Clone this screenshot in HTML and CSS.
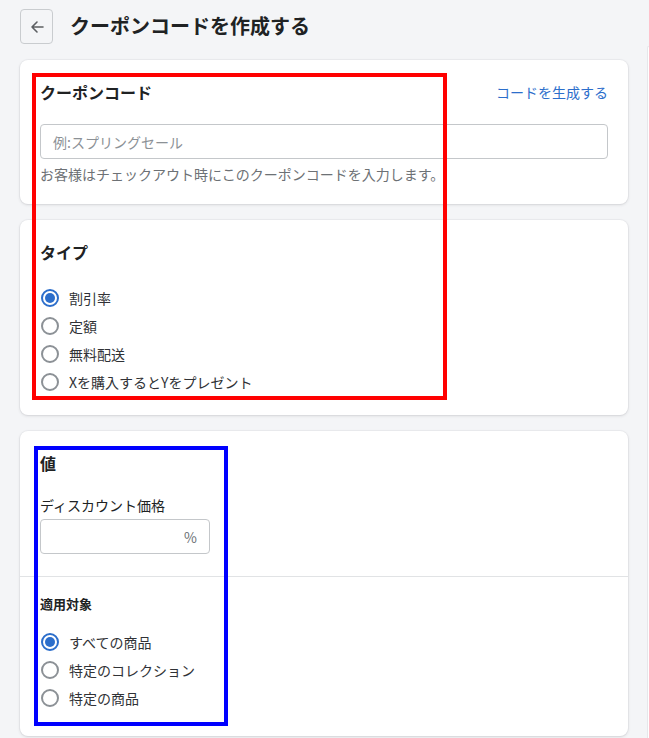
FILE: index.html
```html
<!DOCTYPE html>
<html lang="ja">
<head>
    <meta charset="UTF-8">
    <meta name="viewport" content="width=device-width, initial-scale=1.0">
    <title>クーポンコードを作成する</title>
    <link rel="stylesheet" href="styles.css">
</head>
<body>
    <div class="page">
        <div class="main">
            <header class="header">
                <button class="back-btn" aria-label="戻る">
                    <svg width="16" height="16" viewBox="0 0 16 16">
                        <path d="M14 8H3M8 3L3 8l5 5" fill="none" stroke="#5c5f62" stroke-width="1.6" stroke-linecap="round" stroke-linejoin="round"/>
                    </svg>
                </button>
                <h1 class="title">クーポンコードを作成する</h1>
            </header>

            <section class="card">
                <div class="card-head">
                    <h2 class="card-title">クーポンコード</h2>
                    <a class="link" href="#">コードを生成する</a>
                </div>
                <div class="text-field">
                    <span class="placeholder">例:スプリングセール</span>
                </div>
                <p class="help">お客様はチェックアウト時にこのクーポンコードを入力します。</p>
            </section>

            <section class="card">
                <h2 class="card-title">タイプ</h2>
                <ul class="choices">
                    <li class="choice"><span class="radio checked"></span>割引率</li>
                    <li class="choice"><span class="radio"></span>定額</li>
                    <li class="choice"><span class="radio"></span>無料配送</li>
                    <li class="choice"><span class="radio"></span>Xを購入するとYをプレゼント</li>
                </ul>
            </section>

            <section class="card card-split">
                <div class="card-section">
                    <h2 class="card-title">値</h2>
                    <label class="field-label">ディスカウント価格</label>
                    <div class="text-field small">
                        <span class="suffix">%</span>
                    </div>
                </div>
                <div class="card-section bordered">
                    <h3 class="sub-title">適用対象</h3>
                    <ul class="choices tight">
                        <li class="choice"><span class="radio checked"></span>すべての商品</li>
                        <li class="choice"><span class="radio"></span>特定のコレクション</li>
                        <li class="choice"><span class="radio"></span>特定の商品</li>
                    </ul>
                </div>
            </section>
        </div>
        <aside class="aside"></aside>
    </div>

    <div class="mark mark-red"></div>
    <div class="mark mark-blue"></div>
</body>
</html>
```

FILE: styles.css
```css
body {
    margin: 0;
    background-color: #f4f5f7;
    font-family: "Noto Sans CJK JP", "Noto Sans", sans-serif;
    color: #202223;
    overflow: hidden;
    position: relative;
}
.page {
    display: flex;
    gap: 19px;
    width: 649px;
    height: 738px;
    box-sizing: border-box;
    padding-left: 20px;
    overflow: hidden;
}
.main {
    width: 608px;
    flex-shrink: 0;
}
.aside {
    flex: 1;
    min-width: 0;
    margin-top: 46px;
    background-color: #fff;
    border: 1px solid #e6e7ea;
    border-right: none;
    border-bottom: none;
    border-radius: 8px 0 0 0;
}
.header {
    display: flex;
    align-items: center;
    height: 52px;
    margin-bottom: 8px;
}
.back-btn {
    width: 33px;
    height: 35px;
    margin-top: 1px;
    display: flex;
    align-items: center;
    justify-content: center;
    background: transparent;
    border: 1px solid #c9cccf;
    border-radius: 4px;
    padding: 0;
}
.title {
    margin: 0 0 0 17px;
    font-size: 20px;
    font-weight: 700;
    line-height: 28px;
}
.card {
    background-color: #fff;
    border-radius: 8px;
    box-shadow: 0 0 0 1px rgba(63, 63, 68, 0.04), 0 1px 3px rgba(63, 63, 68, 0.15);
    padding: 20px 20px 19px;
    margin-bottom: 16px;
}
.card-head {
    display: flex;
    justify-content: space-between;
    align-items: center;
}
.card-title {
    margin: 0;
    font-size: 16px;
    font-weight: 700;
    line-height: 24px;
}
.link {
    color: #2c6ecb;
    text-decoration: none;
    font-size: 14px;
    line-height: 24px;
}
.text-field {
    margin-top: 20px;
    height: 35px;
    box-sizing: border-box;
    border: 1px solid #c4c7ca;
    border-radius: 4px;
    display: flex;
    align-items: center;
    padding: 0 12px;
}
.placeholder {
    color: #8c9196;
    font-size: 14px;
}
.help {
    margin: 4px 0 0;
    font-size: 14px;
    line-height: 22px;
    color: #6d7175;
}
.choices {
    list-style: none;
    margin: 20px 0 0;
    padding: 0;
}
.choices.tight {
    margin-top: 14px;
}
.choice {
    display: flex;
    align-items: center;
    height: 28px;
    font-size: 14px;
    color: #303236;
}
.radio {
    width: 18px;
    height: 18px;
    box-sizing: border-box;
    border: 2px solid #8c9196;
    border-radius: 50%;
    margin: 0 10px 0 1px;
    position: relative;
}
.radio.checked {
    border-color: #2c6ecb;
}
.radio.checked::after {
    content: "";
    position: absolute;
    left: 2px;
    top: 2px;
    width: 10px;
    height: 10px;
    border-radius: 50%;
    background-color: #2c6ecb;
}
.card-split {
    padding: 0;
}
.card-section {
    padding: 20px 20px 22px;
}
.card-section.bordered {
    border-top: 1px solid #e1e3e5;
    padding-top: 17px;
    padding-bottom: 24px;
}
.field-label {
    display: block;
    margin-top: 20px;
    font-size: 14px;
    line-height: 20px;
}
.text-field.small {
    margin-top: 4px;
    width: 170px;
    justify-content: flex-end;
}
.suffix {
    color: #6d7175;
    font-size: 14px;
}
.sub-title {
    margin: 0;
    font-size: 13px;
    font-weight: 700;
    line-height: 20px;
}
.mark {
    position: absolute;
    box-sizing: border-box;
    border: 4px solid;
}
.mark-red {
    left: 32px;
    top: 73px;
    width: 415px;
    height: 327px;
    border-color: #ff0000;
}
.mark-blue {
    left: 34px;
    top: 446px;
    width: 194px;
    height: 280px;
    border-color: #0000ff;
}
```
